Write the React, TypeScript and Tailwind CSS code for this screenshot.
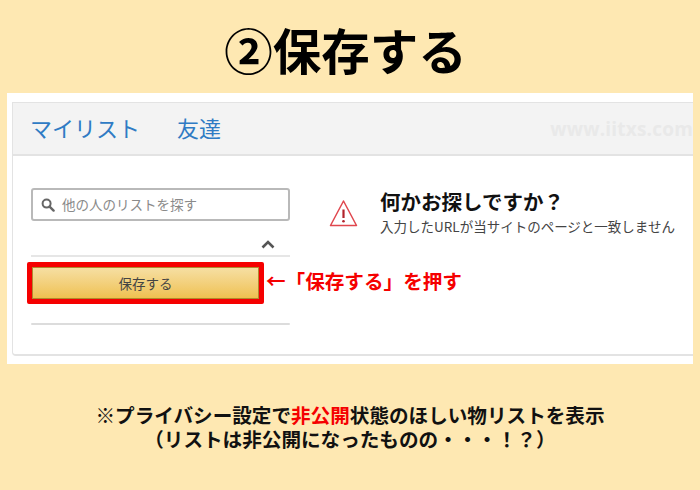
const jp = "font-['Noto_Sans_CJK_JP','Noto_Sans',sans-serif]";

const SearchIcon = () => (
  <svg width="14" height="14" viewBox="0 0 14 14" fill="none" stroke="#666" strokeWidth="2">
    <circle cx="5.6" cy="5.6" r="4" />
    <path d="M8.6 8.6l4 4" strokeLinecap="round" strokeWidth="2.4" />
  </svg>
);

const WarnIcon = () => (
  <svg width="30" height="28" viewBox="0 0 30 28" fill="none">
    <path d="M14.5 2L1.5 26.5h26z" stroke="#e0474e" strokeWidth="1.5" strokeLinejoin="round" fill="#fff" />
    <path d="M14.5 10.5v8.5" stroke="#b1232b" strokeWidth="2.2" />
    <circle cx="14.5" cy="22.2" r="1.3" fill="#b1232b" />
  </svg>
);

const Chevron = () => (
  <svg width="14" height="9" viewBox="0 0 14 9" fill="none" stroke="#555" strokeWidth="2.6">
    <path d="M1.5 7.5L7 2l5.5 5.5" />
  </svg>
);

export default function App() {
  return (
    <div className={`${jp} flex h-[490px] w-[700px] flex-col items-center overflow-hidden bg-[#fee8b2]`}>
      <h1 className="flex h-[93px] items-center justify-center pt-[5px] pr-[9px] text-[48.5px] leading-none font-bold text-black">
        ②保存する
      </h1>

      <div className="h-[271px] w-[686px] bg-white pt-[9px] pl-[5px]">
        <div className="h-[254px] w-[681px] rounded-bl-[4px] border-b-2 border-l border-[#e3e3e3]">
          {/* tab header */}
          <div className="flex h-[54px] items-center justify-between border-t border-b-2 border-[#e3e3e3] bg-[#f3f3f3] pb-[3px] pl-[17px]">
            <div className="flex gap-[37px] text-[22px] text-[#2f7bc4]">
              <span>マイリスト</span>
              <span>友達</span>
            </div>
            <span className="pt-[4px] font-['Open_Sans',sans-serif] text-[19px] font-bold tracking-[0.2px] text-[#e9e9e9]">
              www.iitxs.com
            </span>
          </div>

          <div className="flex">
            {/* left column */}
            <div className="ml-[14px] w-[263px] pt-[32px]">
              <div className="ml-[4px] flex h-[33px] w-[259px] items-center gap-[7px] rounded-[3px] border-2 border-[#b9b9b9] px-[8px] text-[13.5px] text-[#8a8a8a]">
                <SearchIcon />
                <span>他の人のリストを探す</span>
              </div>
              <div className="ml-[4px] flex h-[36px] w-[259px] items-end justify-end border-b-2 border-[#e6e6e6] pr-[15px] pb-[6px]">
                <Chevron />
              </div>
              <div className="mt-[5px] flex items-center gap-[2px]">
                <div className="h-[42px] w-[237px] shrink-0 rounded-[2px] border-[5px] border-[#f50000]">
                  <div className="flex h-full items-center justify-center border border-[#b08a30] bg-gradient-to-b from-[#f6dfa2] to-[#efc14f] text-[13.5px] text-[#444]">
                    保存する
                  </div>
                </div>
                <span className="pb-[5px] text-[19.6px] leading-[26px] font-bold whitespace-nowrap text-[#f50000]">
                  ←「保存する」を押す
                </span>
              </div>
              <div className="mt-[19px] ml-[4px] h-[2px] w-[259px] rounded-full bg-[#dcdcdc]" />
            </div>

            {/* right column */}
            <div className="flex pt-[31px] pl-[39px]">
              <div className="pt-[12px]">
                <WarnIcon />
              </div>
              <div className="ml-[21px]">
                <div className="text-[20.5px] leading-[28px] font-bold text-[#111]">何かお探しですか？</div>
                <div className="mt-[1px] text-[13.5px] leading-[20px] text-[#444]">
                  入力したURLが当サイトのページと一致しません
                </div>
              </div>
            </div>
          </div>
        </div>
      </div>

      <div className="pt-[39px] text-center text-[19.6px] leading-[24px] font-bold text-[#111]">
        <div>
          ※プライバシー設定で<span className="text-[#f50000]">非公開</span>状態のほしい物リストを表示
        </div>
        <div>（リストは非公開になったものの・・・！？）</div>
      </div>
    </div>
  );
}
